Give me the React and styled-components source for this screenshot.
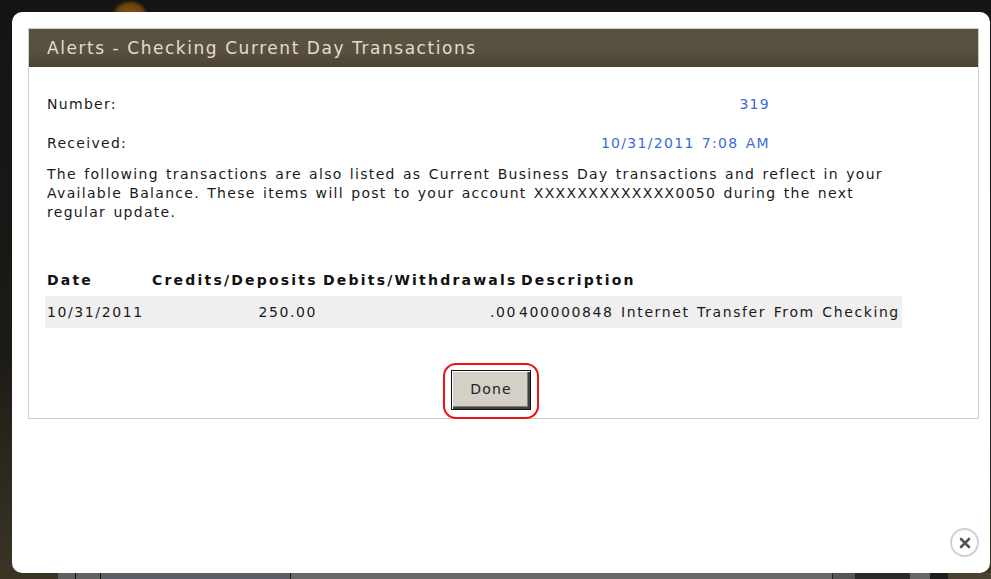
import styled, { createGlobalStyle } from "styled-components";

const GlobalStyle = createGlobalStyle`
    html, body {
        margin: 0;
        padding: 0;
        background: #111111;
    }
    body {
        font-family: "DejaVu Sans", Verdana, sans-serif;
    }
`

const Backdrop = styled.div`
    box-sizing: border-box;
    width: 991px;
    height: 579px;
    display: flex;
    flex-direction: column;
    padding: 12px 1px 0 12px;
    background:
        radial-gradient(ellipse 18px 14px at 130px 14px, #8a5512 0%, #6b420e 70%, transparent 100%),
        linear-gradient(to bottom, #141414 0%, #1c1a16 60%, #3b3526 100%);
    overflow: hidden;
`

const Modal = styled.div`
    box-sizing: border-box;
    height: 561px;
    display: flex;
    flex-direction: column;
    padding: 16px 11px 16px 16px;
    background: #ffffff;
    border-radius: 10px;
`

const Taskbar = styled.div`
    height: 6px;
    margin: 0 -1px 0 -12px;
    background: linear-gradient(to right,
        #3a3424 0 58px, #606060 58px 75px, #111 75px 76px, #636363 76px 100px,
        #111 100px 101px, #5a5f66 101px 290px, #222 290px 291px, #686868 291px 832px,
        #222 832px 833px, #555 833px 855px, #2a2a2a 855px 910px, #666 910px 930px,
        #1e1e1e 930px 948px, #4a4230 948px);
`

const Panel = styled.section`
    border: 1px solid #cccccc;
    display: flex;
    flex-direction: column;
`

const TitleBar = styled.h2`
    margin: 0;
    height: 38px;
    display: flex;
    align-items: center;
    padding: 0 18px;
    background: linear-gradient(to bottom, #5a5241 0%, #575040 60%, #4a4334 100%);
    color: #e2dccb;
    font-size: 17px;
    font-weight: normal;
    letter-spacing: 1.55px;
`

const Body = styled.div`
    padding: 28px 76px 0 16px;
    font-size: 14px;
    line-height: 18px;
    letter-spacing: 1.3px;
    word-spacing: 1.5px;
    color: #1a1a1a;
`

const InfoGrid = styled.div`
    width: 723px;
    margin-left: 2px;
    display: grid;
    grid-template-columns: 1fr auto;
    row-gap: 21px;
`

const Label = styled.span``

const Value = styled.span`
    color: #3c6bd8;
    text-align: right;
`

const Notice = styled.p`
    margin: 13px 0 0;
    padding: 0 2px;
    line-height: 19px;
`

const TxTable = styled.table`
    width: 857px;
    margin-top: 42px;
    border-collapse: collapse;
    table-layout: fixed;
`

const HeadCell = styled.th`
    padding: 0 0 0 2px;
    height: 32px;
    text-align: left;
    font-weight: bold;
    letter-spacing: 2.2px;
    white-space: nowrap;
    color: #111;
`

const Cell = styled.td`
    height: 32px;
    padding: 0 ${(p) => (p.$pad ? p.$pad : 0)}px 0 ${(p) => (p.$left ? 2 : 0)}px;
    background: #efefef;
    letter-spacing: 1.6px;
    text-align: ${(p) => (p.$right ? "right" : "left")};
    white-space: nowrap;
`

const Actions = styled.div`
    display: flex;
    justify-content: center;
    padding: 35px 25px 0 0;
`

const FocusRing = styled.div`
    padding: 5px 6px 7px;
    border: 2px solid #ee1111;
    border-radius: 13px;
    margin-bottom: -1px;
`

const DoneButton = styled.button`
    box-sizing: border-box;
    width: 80px;
    height: 40px;
    background: #d4d0c8;
    border: 1px solid #111;
    box-shadow: inset 1px 1px 0 #ffffff, inset -2px -2px 0 #404040, inset -3px -3px 0 #808080;
    font-family: "DejaVu Sans", Verdana, sans-serif;
    font-size: 14px;
    letter-spacing: 1.2px;
    color: #222;
    padding: 0 0 2px;
`

const CloseRow = styled.div`
    margin-top: auto;
    display: flex;
    justify-content: flex-end;
`

const CloseButton = styled.button`
    width: 29px;
    height: 29px;
    padding: 0;
    border: 2px solid #d2d2d2;
    border-radius: 50%;
    background: #ffffff;
    display: flex;
    align-items: center;
    justify-content: center;
`

const columns = [105, 171, 198, 383];

const App = () => {
    return (
        <Backdrop>
            <GlobalStyle />
            <Modal>
                <Panel>
                    <TitleBar>Alerts - Checking Current Day Transactions</TitleBar>
                    <Body>
                        <InfoGrid>
                            <Label>Number:</Label>
                            <Value>319</Value>
                            <Label>Received:</Label>
                            <Value>10/31/2011 7:08 AM</Value>
                        </InfoGrid>
                        <Notice>
                            The following transactions are also listed as Current Business Day transactions and
                            reflect in your Available Balance. These items will post to your account
                            XXXXXXXXXXXXX0050 during the next regular update.
                        </Notice>
                        <TxTable>
                            <colgroup>
                                {columns.map((w, i) => <col key={i} style={{ width: w }} />)}
                            </colgroup>
                            <thead>
                                <tr>
                                    <HeadCell>Date</HeadCell>
                                    <HeadCell>Credits/Deposits</HeadCell>
                                    <HeadCell>Debits/Withdrawals</HeadCell>
                                    <HeadCell>Description</HeadCell>
                                </tr>
                            </thead>
                            <tbody>
                                <tr>
                                    <Cell $left>10/31/2011</Cell>
                                    <Cell $right $pad={4}>250.00</Cell>
                                    <Cell $right $pad={2}>.00</Cell>
                                    <Cell>400000848 Internet Transfer From Checking</Cell>
                                </tr>
                            </tbody>
                        </TxTable>
                    </Body>
                    <Actions>
                        <FocusRing>
                            <DoneButton>Done</DoneButton>
                        </FocusRing>
                    </Actions>
                </Panel>
                <CloseRow>
                    <CloseButton aria-label="Close">
                        <svg width="12" height="12" viewBox="0 0 12 12">
                            <path d="M2 2 L10 10 M10 2 L2 10" stroke="#555" strokeWidth="2.6" strokeLinecap="round" />
                        </svg>
                    </CloseButton>
                </CloseRow>
            </Modal>
            <Taskbar />
        </Backdrop>
    )
}

export default App
